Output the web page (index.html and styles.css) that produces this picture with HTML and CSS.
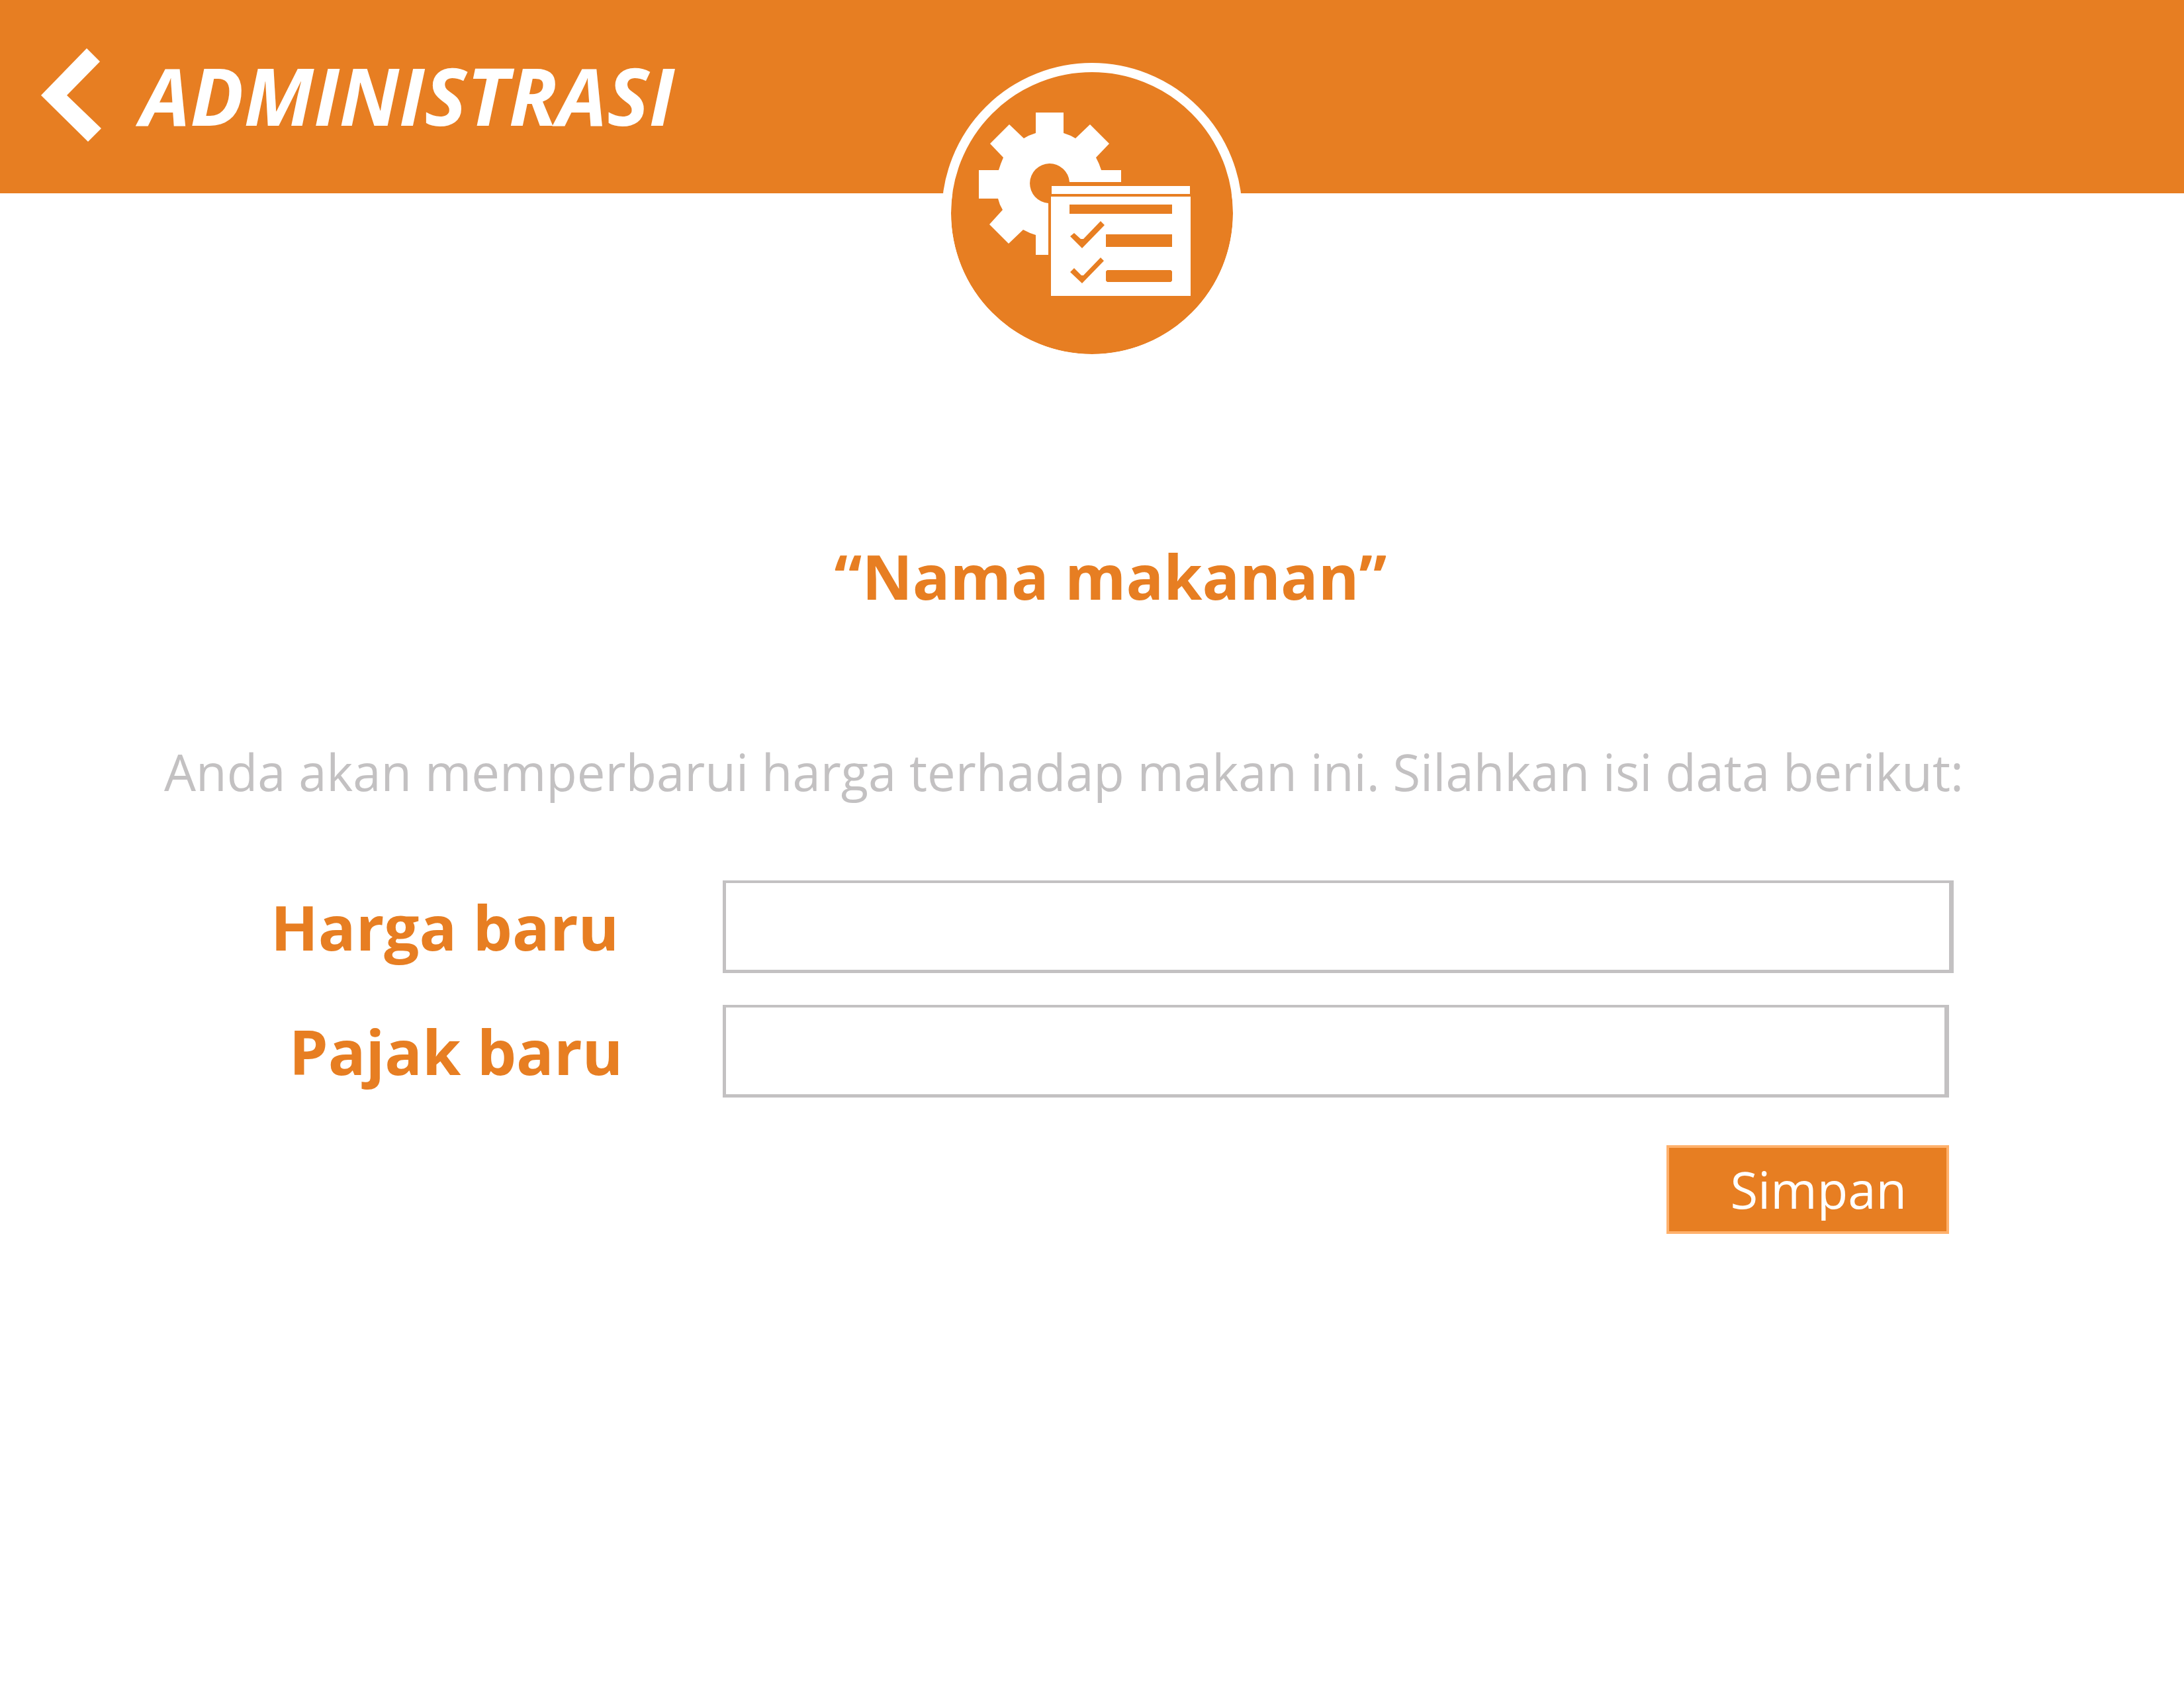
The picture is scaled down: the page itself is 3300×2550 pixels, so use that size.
FILE: index.html
```html
<!DOCTYPE html>
<html lang="id">
<head>
  <meta charset="utf-8">
  <meta name="viewport" content="width=device-width, initial-scale=1">
  <title>Administrasi</title>
  <link rel="stylesheet" href="styles.css">
</head>
<body>
  <header class="topbar">
    <a class="back" href="#" aria-label="Kembali">
      <svg class="back-icon" viewBox="0 0 92 142" aria-hidden="true">
        <path d="M69 0 89 20 39 71 91 121 71 141 0 71Z" fill="#fff"/>
      </svg>
    </a>
    <h1 class="topbar-title">ADMINISTRASI</h1>
    <div class="badge">
      <svg class="badge-icon" viewBox="0 0 426 426" aria-hidden="true">
        <path fill="#fff" fill-rule="evenodd" d="M128 61h42v31q10 3 18 8l22-21 29 29-20 21q5 9 8 19h30v18h-78a30 30 0 1 0-32 32v78h-19v-30q-10-3-19-8l-22 21-29-29 20-22q-5-8-7-17H42v-43h30q3-10 7-19L59 108l29-29 22 21q8-5 18-8Z"/>
        <path fill="#fff" d="M152 172h209v12H152ZM151 188h211v150H151Z"/>
        <path fill="#e77e22" d="M179 200h155v14H179ZM234 245h100v19H234ZM236 299h96l2 2v14l-2 2h-96l-2-2v-14ZM180 248l6-5 10 9h4l26-27 6 6-34 35ZM180 302l6-6 11 11h3l26-27 5 5-33 34Z"/>
      </svg>
    </div>
  </header>

  <main class="content">
    <h2 class="item-name">“Nama makanan”</h2>
    <p class="intro">Anda akan memperbarui harga terhadap makan ini. Silahkan isi data berikut:</p>
    <form class="form">
      <div class="field field-price">
        <label class="field-label" for="harga">Harga baru</label>
        <input class="field-input" id="harga" name="harga" type="text">
      </div>
      <div class="field field-tax">
        <label class="field-label" for="pajak">Pajak baru</label>
        <input class="field-input" id="pajak" name="pajak" type="text">
      </div>
      <button class="save" type="submit">Simpan</button>
    </form>
  </main>
</body>
</html>
```

FILE: styles.css
```css
* {
  box-sizing: border-box;
}

body {
  margin: 0;
  background: #fff;
  color: #e77e22;
  font-family: "Open Sans", "Noto Sans", sans-serif;
}

.topbar {
  position: relative;
  display: flex;
  align-items: center;
  gap: 58px;
  height: 292px;
  padding: 0 62px 4px;
  background: #e77e22;
}

.back-icon {
  display: block;
  width: 92px;
  height: 142px;
}

.topbar-title {
  margin: 0;
  color: #fff;
  font-size: 120px;
  font-style: italic;
  font-weight: 700;
  line-height: 160px;
}

/* Round emblem that hangs over the lower edge of the bar */
.badge {
  position: absolute;
  top: 95px;
  left: 50%;
  width: 454px;
  height: 454px;
  border: 14px solid #fff;
  border-radius: 50%;
  background: #e77e22;
  background-clip: padding-box;
  transform: translateX(-50%);
}

.badge-icon {
  display: block;
  width: 100%;
}

.content {
  padding: 508px 348px 80px 248px;
}

.item-name {
  margin: 0 0 176px;
  padding-left: 156px;
  font-size: 94px;
  font-weight: 700;
  line-height: 140px;
  text-align: center;
}

.intro {
  margin: 0 0 114px;
  color: #c3c1c2;
  font-size: 76px;
  line-height: 100px;
  white-space: nowrap;
}

.form {
  display: flex;
  flex-direction: column;
  gap: 48px;
}

.field {
  display: grid;
  grid-template-columns: 3fr 8fr;
  gap: 147px;
}

.field-label {
  padding-right: 4px;
  font-size: 94px;
  font-weight: 700;
  line-height: 140px;
  text-align: right;
}

.field-price .field-label {
  padding-right: 10px;
}

.field-input {
  width: 100%;
  height: 140px;
  padding: 0 32px;
  border: solid #c3c1c2;
  border-width: 4px 7px 5px 5px;
  background: #fff;
  color: #e77e22;
  font: inherit;
  font-size: 76px;
}

.field-tax .field-input {
  width: calc(100% - 7px);
}

.save {
  align-self: flex-end;
  margin: 24px 7px 0 0;
  padding: 0 60px 0 92px;
  border: 4px solid #ffb16c;
  background: #e77e22;
  color: #fff;
  font: inherit;
  font-size: 76px;
  line-height: 126px;
}
```
